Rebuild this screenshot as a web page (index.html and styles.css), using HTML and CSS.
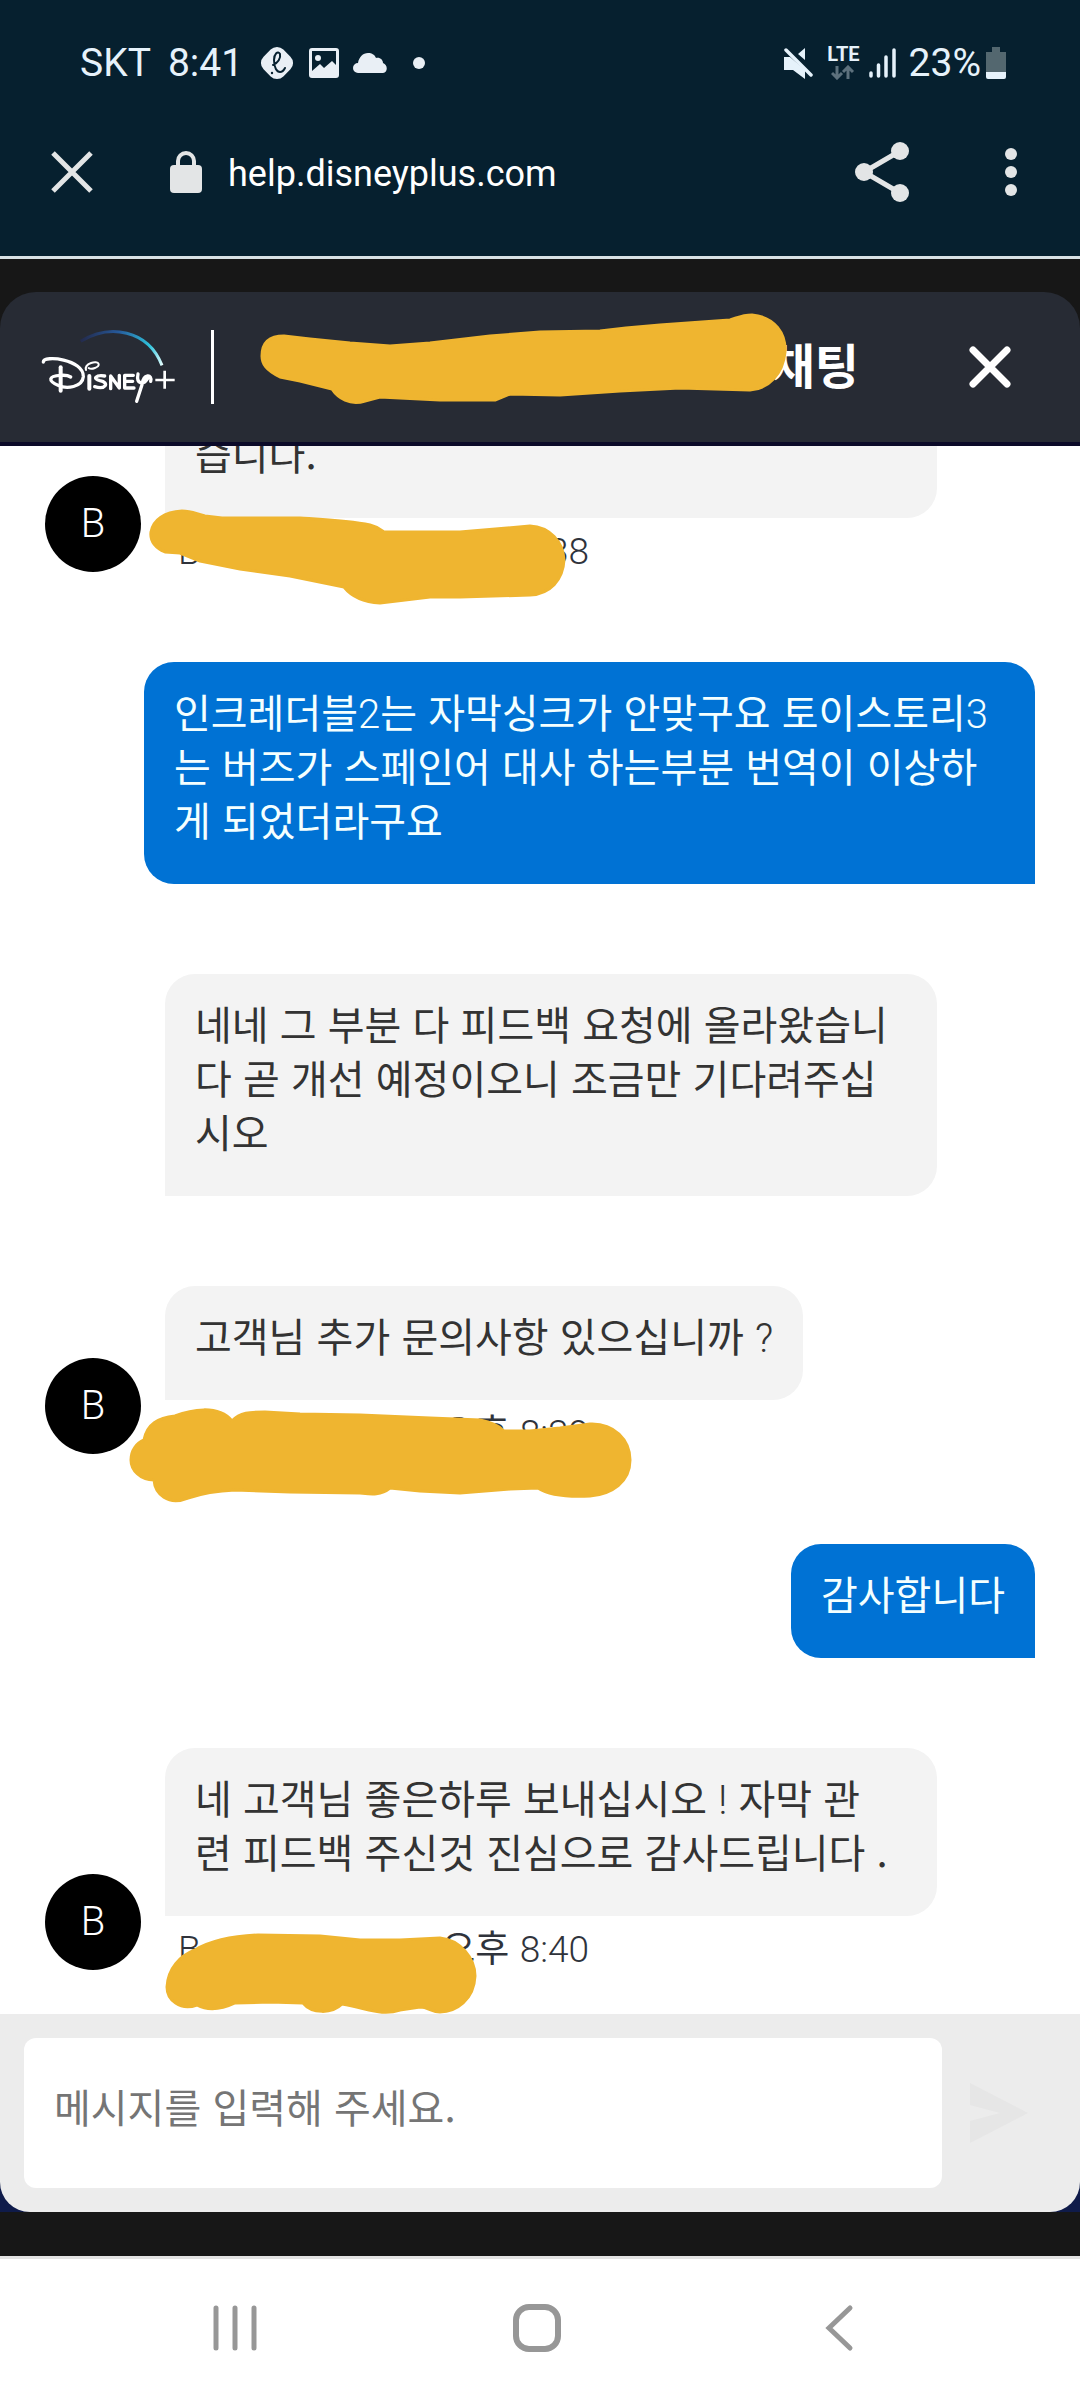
FILE: index.html
```html
<!DOCTYPE html>
<html lang="ko">
<head>
<meta charset="utf-8">
<meta name="viewport" content="width=device-width, initial-scale=1">
<title>help.disneyplus.com</title>
<link rel="stylesheet" href="styles.css">
</head>
<body>
<div class="screen">
  <header class="browser">
    <div class="status">
      <div class="status-left">
        <span class="carrier">SKT</span>
        <span class="clock">8:41</span>
        <svg class="ic-app" viewBox="0 0 36 36" aria-hidden="true"><rect x="4" y="4" width="28" height="28" rx="9" transform="rotate(45 18 18)" fill="#e9eff5"/><path d="M14 20c5-2 8-7 7-11-2-4-6 0-6 6 0 8 3 12 6 12 2 0 4-2 5-4" fill="none" stroke="#06202f" stroke-width="2" stroke-linecap="round"/><circle cx="13" cy="28" r="1.200" fill="#06202f"/></svg>
        <svg class="ic-photo" viewBox="0 0 30 30" aria-hidden="true"><path fill-rule="evenodd" fill="#e9eff5" d="M3 0h24a3 3 0 0 1 3 3v24a3 3 0 0 1-3 3H3a3 3 0 0 1-3-3V3a3 3 0 0 1 3-3zm0 3v20l8-7 4 4 8-7 4 4V3z"/><circle cx="9" cy="10" r="3" fill="#e9eff5"/></svg>
        <svg class="ic-cloud" viewBox="0 0 34 20" aria-hidden="true"><path fill="#e9eff5" d="M5 20a5 5 0 0 1 0-10C6 4 10 0 15 0c4 0 7 2 8 5 4-1 7 2 7 5 5 2 5 9 0 10z"/></svg>
        <svg class="ic-dot" viewBox="0 0 12 12" aria-hidden="true"><circle cx="6" cy="6" r="6" fill="#e9eff5"/></svg>
      </div>
      <div class="status-right">
        <svg class="ic-mute" viewBox="0 0 30 32" aria-hidden="true"><path fill="#e6f2fb" d="M0 10h6l15 13v9L9 23H0zM14 7l7-6v12z"/><path d="M2 3l25 25" stroke="#e6f2fb" stroke-width="3.500" stroke-linecap="round"/></svg>
        <div class="lte"><span>LTE</span><svg viewBox="0 0 24 15" aria-hidden="true"><path d="M6 1v11M1 8l5 5 5-5M17 14V3M12 7l5-5 5 5" fill="none" stroke="#5d717d" stroke-width="3"/></svg></div>
        <svg class="ic-signal" viewBox="0 0 28 30" aria-hidden="true"><path d="M2 25v3M9.500 17v11M17 9v19M25 2v26" stroke="#e6f2fb" stroke-width="3.500" stroke-linecap="round"/></svg>
        <span class="percent">23%</span>
        <svg class="ic-battery" viewBox="0 0 20 32" aria-hidden="true"><path fill="#53676f" d="M6 0h8v5h6v21H0V5h6z"/><path fill="#e6f2fb" d="M0 25h20v5a2 2 0 0 1-2 2H2a2 2 0 0 1-2-2z"/></svg>
      </div>
    </div>
    <div class="urlbar">
      <button class="icon-btn" aria-label="닫기"><svg class="ic-close" viewBox="0 0 42 42"><path d="M2 2l38 38M40 2L2 40" stroke="#e3e5e6" stroke-width="5"/></svg></button>
      <svg class="ic-lock" viewBox="0 0 32 42" aria-hidden="true"><rect y="14" width="32" height="28" rx="4" fill="#e3e5e6"/><path d="M8 16v-6a8 8 0 0 1 16 0v6" fill="none" stroke="#e3e5e6" stroke-width="4"/></svg>
      <a class="url" href="#">help.disneyplus.com</a>
      <button class="icon-btn share" aria-label="공유"><svg class="ic-share" viewBox="0 0 54 60"><path d="M45 9L9 30l36 21" fill="none" stroke="#e3e5e6" stroke-width="5"/><g fill="#e3e5e6"><circle cx="45" cy="9" r="9"/><circle cx="9" cy="30" r="9"/><circle cx="45" cy="51" r="9"/></g></svg></button>
      <button class="icon-btn" aria-label="메뉴"><svg class="ic-more" viewBox="0 0 12 48"><g fill="#e3e5e6"><circle cx="6" cy="6" r="6"/><circle cx="6" cy="24" r="6"/><circle cx="6" cy="42" r="6"/></g></svg></button>
    </div>
  </header>

  <main class="panel">
    <div class="chat-head">
      <svg class="logo" viewBox="0 0 450 270" role="img" aria-label="Disney+">
        <defs><linearGradient id="arc" gradientUnits="userSpaceOnUse" x1="130" y1="60" x2="380" y2="130"><stop offset="0" stop-color="#23294a"/><stop offset="0.400" stop-color="#26599a"/><stop offset="0.800" stop-color="#2fc3dc"/><stop offset="1" stop-color="#e8ffff"/></linearGradient></defs>
        <path d="M134 58C220 5 335 22 378 130" fill="none" stroke="url(#arc)" stroke-width="9"/>
        <g fill="none" stroke="#fff" stroke-width="10" stroke-linecap="round" stroke-linejoin="round">
          <path d="M22 120c0-22 122-8 120 44-3 32-50 38-76 26-30-14-30-28 8-30 14-1 24 1 30 5" />
          <path d="M74 136v70" stroke-width="12"/>
          <path d="M150 144c-6-20 34-30 38-18 2 10-22 18-30 12" stroke-width="6"/>
          <path d="M160 162v38" stroke-width="12"/>
          <path d="M206 162c-26-4-38 8-14 14 30 6 16 28-16 18"/>
          <path d="M224 200v-38l26 36v-38"/>
          <path d="M292 160h-26v38h28M268 178h22"/>
          <path d="M306 156c-6 30 16 36 30 12M344 178c6-22-22-24-26 10l-16 50" />
          <path d="M386 146v54M358 174h58" stroke-width="8" stroke-linecap="butt"/>
        </g>
      </svg>
      <div class="divider"></div>
      <h1 class="title">채팅</h1>
      <button class="icon-btn" aria-label="채팅 닫기"><svg class="ic-end" viewBox="0 0 42 42"><path d="M4 4l34 34M38 4L4 38" stroke="#fff" stroke-width="7" stroke-linecap="round"/></svg></button>
    </div>

    <div class="messages">
      <section class="agent signed">
        <p class="bubble wide">습니다.</p>
        <div class="avatar">B</div>
        <div class="meta"><span class="lat">B</span><span>오후 <span class="lat">8:38</span></span></div>
      </section>
      <section class="user">
        <p class="bubble wide">인크레더블<span class="lat">2</span>는 자막싱크가 안맞구요 토이스토리<span class="lat">3</span><br>는 버즈가 스페인어 대사 하는부분 번역이 이상하<br>게 되었더라구요</p>
      </section>
      <section class="agent">
        <p class="bubble wide">네네 그 부분 다 피드백 요청에 올라왔습니<br>다 곧 개선 예정이오니 조금만 기다려주십<br>시오</p>
      </section>
      <section class="agent signed">
        <p class="bubble">고객님 추가 문의사항 있으십니까 <span class="lat">?</span></p>
        <div class="avatar">B</div>
        <div class="meta"><span class="lat">B</span><span>오후 <span class="lat">8:39</span></span></div>
      </section>
      <section class="user">
        <p class="bubble">감사합니다</p>
      </section>
      <section class="agent signed">
        <p class="bubble wide">네 고객님 좋은하루 보내십시오 <span class="lat">!</span> 자막 관<br>련 피드백 주신것 진심으로 감사드립니다 .</p>
        <div class="avatar">B</div>
        <div class="meta"><span class="lat">B</span><span>오후 <span class="lat">8:40</span></span></div>
      </section>
    </div>

    <div class="dock">
      <form class="composer">
        <input class="field" type="text" placeholder="메시지를 입력해 주세요." aria-label="메시지를 입력해 주세요.">
        <button class="icon-btn" type="button" aria-label="보내기"><svg class="ic-send" viewBox="0 0 58 60"><path fill="#e6e6e6" d="M0 0l58 30L0 60V38l30-8-30-8z"/></svg></button>
      </form>
    </div>
  </main>

  <nav class="navbar">
    <button class="icon-btn" aria-label="최근 앱"><svg class="ic-nav" viewBox="0 0 48 48"><path d="M5 4v40M24 4v40M43 4v40" stroke="#979797" stroke-width="5" stroke-linecap="round"/></svg></button>
    <button class="icon-btn" aria-label="홈"><svg class="ic-nav" viewBox="0 0 48 48"><rect x="3" y="3" width="42" height="42" rx="13" fill="none" stroke="#979797" stroke-width="6"/></svg></button>
    <button class="icon-btn" aria-label="뒤로"><svg class="ic-nav" viewBox="0 0 48 48"><path d="M35 4L14 24l21 20" fill="none" stroke="#979797" stroke-width="5" stroke-linecap="round"/></svg></button>
  </nav>

  <svg class="marker" viewBox="0 0 1080 2400" preserveAspectRatio="none" aria-hidden="true">
    <g fill="#efb530" stroke="#efb530" stroke-width="3" stroke-linejoin="round">
      <path d="M262 356C262 342 270 336 284 336L310 339 350 343 390 346 430 343 490 336 540 332 600 331 626 328 660 325 730 320C737 318 742 315 752 315C775 317 786 334 785 352C783 374 768 389 750 390L680 388 620 391 560 395 510 394 495 400 440 400 380 397 365 401C350 406 338 398 332 389L300 381 280 377C266 370 262 364 262 356Z"/>
      <path d="M151 532C153 520 164 512 182 511C192 511 196 514 205 516L222 518 300 518C330 520 350 521 370 525C378 527 380 529 384 532L460 532 530 526C550 527 563 542 564 560C563 580 550 594 530 595L460 597 430 597 380 603C364 602 352 597 344 587L290 576 240 569 200 561 180 553 165 552C154 547 150 540 151 532Z"/>
      <path d="M131 1460C131 1450 137 1443 144 1440C147 1424 158 1418 175 1416C190 1410 218 1404 232 1421C240 1412 250 1412 265 1412L300 1414 360 1415 430 1418 480 1420C490 1422 499 1426 504 1431L530 1431 560 1428 590 1424C614 1423 630 1440 630 1460C630 1482 612 1494 590 1496C570 1497 550 1496 538 1488L510 1489 460 1493 420 1491 390 1488C380 1496 370 1494 360 1493L290 1492 235 1490C214 1491 200 1494 188 1498C168 1506 155 1494 154 1480C140 1480 131 1470 131 1460Z"/>
      <path d="M167 1987C168 1968 180 1956 195 1950C212 1940 235 1936 258 1935L320 1936 360 1940 400 1940 440 1938C460 1940 475 1958 475 1976C474 2000 456 2012 440 2012C432 2012 428 2007 420 2007L400 2010C382 2016 370 2009 342 2004C332 2014 312 2014 303 2003L270 2002 235 2003C220 2010 208 2011 197 2005C180 2011 167 2000 167 1987Z"/>
    </g>
  </svg>
</div>
</body>
</html>
```
FILE: styles.css
```css
* { box-sizing: border-box; }

body {
  margin: 0;
  background: #fff;
  font-family: "Noto Sans CJK KR", "Noto Sans", sans-serif;
}

svg { display: block; flex: none; }

.screen {
  position: relative;
  display: flex;
  flex-direction: column;
  height: 100vh;
  overflow: hidden;
}

.icon-btn {
  display: block;
  flex: none;
  margin: 0;
  padding: 0;
  border: 0;
  background: none;
}

/* Browser chrome */
.browser {
  flex: none;
  padding-top: 36px;
  background: #06202f;
  border-bottom: 3px solid #d8e1e5;
  font-family: Roboto, sans-serif;
}

.status {
  display: flex;
  justify-content: space-between;
  align-items: center;
  padding: 0 74px 0 80px;
  color: #e6f2fb;
  font-size: 39px;
  line-height: 54px;
}

.status-left, .status-right { display: flex; align-items: center; }
.status-left { gap: 14px; }
.carrier { margin-right: 3px; }
.clock { margin-right: 2px; }
.ic-app { width: 36px; height: 36px; }
.ic-photo { width: 30px; height: 30px; }
.ic-cloud { width: 34px; height: 20px; }
.ic-dot { width: 12px; height: 12px; margin-left: 12px; }

.ic-mute { width: 30px; height: 32px; margin-right: 13px; }
.lte {
  display: flex;
  flex-direction: column;
  align-items: center;
  gap: 2px;
  margin-right: 9px;
  font-size: 20px;
  font-weight: 700;
  line-height: 17px;
}
.lte svg { width: 24px; height: 15px; }
.ic-signal { width: 28px; height: 30px; margin-right: 12px; }
.percent { margin-right: 5px; }
.ic-battery { width: 20px; height: 32px; }

.urlbar {
  display: flex;
  align-items: center;
  padding: 52px 63px 54px 51px;
}
.ic-close { width: 42px; height: 42px; }
.ic-lock { width: 32px; height: 42px; margin: 0 26px 0 77px; }
.url {
  flex: 1;
  padding-top: 3px;
  color: #fff;
  font-size: 36px;
  line-height: 44px;
  text-decoration: none;
}
.ic-share { width: 54px; height: 60px; }
.share { margin-right: 96px; }
.ic-more { width: 12px; height: 48px; }

/* Chat panel */
.panel {
  display: flex;
  flex: 1;
  flex-direction: column;
  min-height: 0;
  padding: 33px 0 44px;
  background: #171717;
}

.chat-head {
  display: flex;
  flex: none;
  align-items: center;
  height: 154px;
  padding: 0 69px 0 36px;
  border-bottom: 4px solid #0b0a28;
  border-radius: 36px 36px 0 0;
  background: #272b34;
}
.logo { width: 150px; height: 90px; }
.divider { width: 3px; height: 74px; margin-left: 25px; background: #fff; }
.title {
  flex: 1;
  margin: 0;
  padding: 0 110px 8px 0;
  color: #fff;
  font-size: 48px;
  font-weight: 700;
  line-height: 60px;
  text-align: right;
}
.ic-end { width: 42px; height: 42px; }

.messages {
  display: flex;
  flex: 1;
  flex-direction: column;
  justify-content: flex-end;
  gap: 90px;
  min-height: 0;
  padding: 0 45px 44px;
  overflow: hidden;
  background: #fff;
}

.bubble {
  margin: 0;
  padding: 22px 30px 38px;
  border-radius: 30px;
  font-size: 40px;
  line-height: 54px;
}

/* Thin Latin letters and digits inside Korean text */
.lat {
  font-family: Roboto, sans-serif;
  font-weight: 300;
  line-height: 1;
}

.user { display: flex; justify-content: flex-end; }
.user .bubble {
  max-width: 90%;
  border-bottom-right-radius: 0;
  background: #0072d4;
  color: #f4ffff;
}
.user .wide { width: 90%; }

.agent {
  display: grid;
  grid-template-columns: 96px 1fr;
  column-gap: 24px;
  padding-right: 98px;
}
.agent .bubble {
  grid-column: 2;
  grid-row: 1;
  justify-self: start;
  border-bottom-left-radius: 0;
  background: #f3f3f3;
  color: #333;
}
.agent .wide { justify-self: stretch; }
.signed { grid-template-rows: auto 54px; }

.avatar {
  grid-column: 1;
  grid-row: 1 / 3;
  align-self: end;
  width: 96px;
  height: 96px;
  border-radius: 50%;
  background: #000;
  color: #fff;
  font-family: Roboto, sans-serif;
  font-size: 40px;
  font-weight: 300;
  line-height: 96px;
  text-align: center;
}

.meta {
  display: flex;
  grid-column: 2;
  grid-row: 2;
  justify-content: space-between;
  align-items: baseline;
  width: 424px;
  padding: 8px 0 0 13px;
  color: #2f333b;
  font-size: 37px;
  line-height: 44px;
}

.dock { flex: none; background: #0f1b4a; }
.composer {
  display: flex;
  align-items: center;
  gap: 28px;
  padding: 24px 52px 24px 24px;
  border-radius: 0 0 30px 30px;
  background: #ececec;
}
.field {
  flex: 1;
  min-width: 0;
  height: 150px;
  padding: 0 30px 14px;
  border: 0;
  border-radius: 12px;
  background: #fff;
  color: #333;
  font-family: inherit;
  font-size: 40px;
}
.field::placeholder { color: #757575; opacity: 1; }
.ic-send { width: 58px; height: 60px; }

/* System navigation */
.navbar {
  display: flex;
  flex: none;
  justify-content: space-between;
  align-items: center;
  height: 144px;
  padding: 0 217px 4px 211px;
  border-top: 3px solid #e2e2e2;
  background: #fff;
}
.ic-nav { width: 48px; height: 48px; }

/* Hand-drawn marker strokes over the chat */
.marker {
  position: absolute;
  inset: 0;
  width: 100%;
  height: 100%;
  pointer-events: none;
}
```
